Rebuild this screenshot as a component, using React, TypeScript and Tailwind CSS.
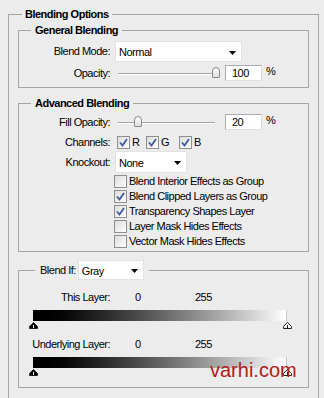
import { type ReactNode } from 'react';

function Arrow(): JSX.Element {
  return (
    <svg width="7" height="4" viewBox="0 0 7 4" className="shrink-0">
      <path d="M0 0H7L3.5 4Z" fill="#000" />
    </svg>
  );
}

function Select({ value, className }: { value: string; className: string }): JSX.Element {
  return (
    <div
      className={`flex items-center justify-between border border-[#e2e2e2] bg-white pl-[3px] pr-[5px] pt-[2px] ${className}`}
    >
      <span>{value}</span>
      <Arrow />
    </div>
  );
}

function Checkbox({ checked }: { checked?: boolean }): JSX.Element {
  return (
    <div className="flex h-[13px] w-[13px] shrink-0 items-center justify-center border border-[#8f8f8f] bg-gradient-to-br from-[#dcdcdc] to-white">
      {checked && (
        <svg width="9" height="9" viewBox="0 0 9 9">
          <path d="M1 4.5L3.5 7.5L8 1" fill="none" stroke="#3d5a9c" strokeWidth="1.8" />
        </svg>
      )}
    </div>
  );
}

function Label({ children }: { children: ReactNode }): JSX.Element {
  return <div className="w-[91px] shrink-0 text-right">{children}</div>;
}

function Slider({ thumb }: { thumb: number }): JSX.Element {
  return (
    <div className="relative flex h-[16px] w-[105px] shrink-0 items-center">
      <div className="ml-[3px] mt-[2px] h-[2px] w-[97px] border-t border-[#a3a3a3] bg-white" />
      <div
        className="absolute top-[2px] h-[11px] w-[8px] rounded-t-[4px] rounded-b-[1px] border border-[#8a8a8a] bg-gradient-to-b from-white to-[#dedede]"
        style={{ left: thumb }}
      />
    </div>
  );
}

function NumInput({ value }: { value: string }): JSX.Element {
  return (
    <div className="ml-[5px] flex h-[16px] w-[37px] shrink-0 items-center border border-[#dbdfe6] border-l-[#abadb3] border-t-[#abadb3] bg-white pl-[6px]">
      {value}
    </div>
  );
}

function SliderRow({ label, thumb, value }: { label: string; thumb: number; value: string }): JSX.Element {
  return (
    <div className="flex h-[16px] items-center">
      <Label>{label}</Label>
      <div className="ml-[5px] flex items-center">
        <Slider thumb={thumb} />
        <NumInput value={value} />
        <span className="ml-[4px] -mt-[3px]">%</span>
      </div>
    </div>
  );
}

function Thumb({ dark }: { dark?: boolean }): JSX.Element {
  return (
    <svg width="9" height="7" viewBox="0 0 9 7">
      <path
        d="M4.5 0.5L8.5 4.5V6.5H0.5V4.5Z"
        fill={dark ? '#000' : '#fff'}
        stroke="#222"
        strokeWidth="1"
      />
      <path d="M4.5 3V6" stroke={dark ? '#fff' : '#222'} strokeWidth="1" />
    </svg>
  );
}

function LayerRange({ label, className }: { label: string; className: string }): JSX.Element {
  return (
    <div className={className}>
      <div className="flex h-[14px] items-center">
        <Label>{label}</Label>
        <span className="ml-[25px] w-[60px]">0</span>
        <span>255</span>
      </div>
      <div className="ml-[14px] mt-[6px] h-[11px] w-[254px] border-r border-[#c9c9c9] bg-gradient-to-r from-black to-white" />
      <div className="ml-[10px] mt-[1px] flex w-[263px] justify-between">
        <Thumb dark />
        <Thumb />
      </div>
    </div>
  );
}

const checks: [string, boolean][] = [
  ['Blend Interior Effects as Group', false],
  ['Blend Clipped Layers as Group', true],
  ['Transparency Shapes Layer', true],
  ['Layer Mask Hides Effects', false],
  ['Vector Mask Hides Effects', false],
];

export default function App(): JSX.Element {
  return (
    <div className="relative h-[398px] w-[324px] overflow-hidden bg-[#ececec] font-['Liberation_Sans',Arial,sans-serif] text-[11px] leading-[13px] tracking-[-0.5px] text-black">
      <fieldset className="ml-[8px] mt-[8px] h-[400px] w-[311px] border border-[#a5a5a5]">
        <legend className="ml-[13px] px-[3px] font-bold">Blending Options</legend>

        <fieldset className="mx-[9px] mt-[3px] border border-[#a5a5a5] pb-[6px]">
          <legend className="ml-[12px] px-[4px] font-bold">General Blending</legend>
          <div className="mt-[4px] flex h-[21px] items-center">
            <Label>Blend Mode:</Label>
            <Select value="Normal" className="ml-[5px] h-[21px] w-[127px]" />
          </div>
          <div className="mt-[3px]">
            <SliderRow label="Opacity:" thumb={97} value="100" />
          </div>
        </fieldset>

        <fieldset className="mx-[9px] mt-[9px] border border-[#a5a5a5] pb-[2px]">
          <legend className="ml-[12px] px-[4px] font-bold">Advanced Blending</legend>
          <div className="mt-[4px]">
            <SliderRow label="Fill Opacity:" thumb={19} value="20" />
          </div>
          <div className="mt-[4px] flex h-[16px] items-center">
            <Label>Channels:</Label>
            <div className="ml-[7px] flex items-center">
              <Checkbox checked />
              <span className="ml-[2px] w-[14px]">R</span>
              <Checkbox checked />
              <span className="ml-[2px] w-[18px]">G</span>
              <Checkbox checked />
              <span className="ml-[2px]">B</span>
            </div>
          </div>
          <div className="mt-[1px] flex h-[22px] items-center">
            <Label>Knockout:</Label>
            <Select value="None" className="ml-[5px] h-[22px] w-[72px]" />
          </div>
          <div className="mt-[1px] ml-[95px]">
            {checks.map(([text, on]) => (
              <div key={text} className="flex h-[15px] items-center gap-[2px]">
                <Checkbox checked={on} />
                <span>{text}</span>
              </div>
            ))}
          </div>
        </fieldset>

        <fieldset className="mx-[9px] mt-[8px] border border-[#a5a5a5] pb-[11px]">
          <legend className="ml-[16px] px-[5px]">
            <div className="flex items-center">
              <span className="mr-[2px]">Blend If:</span>
              <Select value="Gray" className="h-[20px] w-[66px]" />
            </div>
          </legend>
          <LayerRange label="This Layer:" className="mt-[10px]" />
          <LayerRange label="Underlying Layer:" className="mt-[8px]" />
        </fieldset>
      </fieldset>

      <div className="absolute left-[210px] top-[358px] font-['Liberation_Sans',Arial,sans-serif] text-[20px] leading-[24px] tracking-normal text-[#b02020]">
        varhi.com
      </div>
    </div>
  );
}
